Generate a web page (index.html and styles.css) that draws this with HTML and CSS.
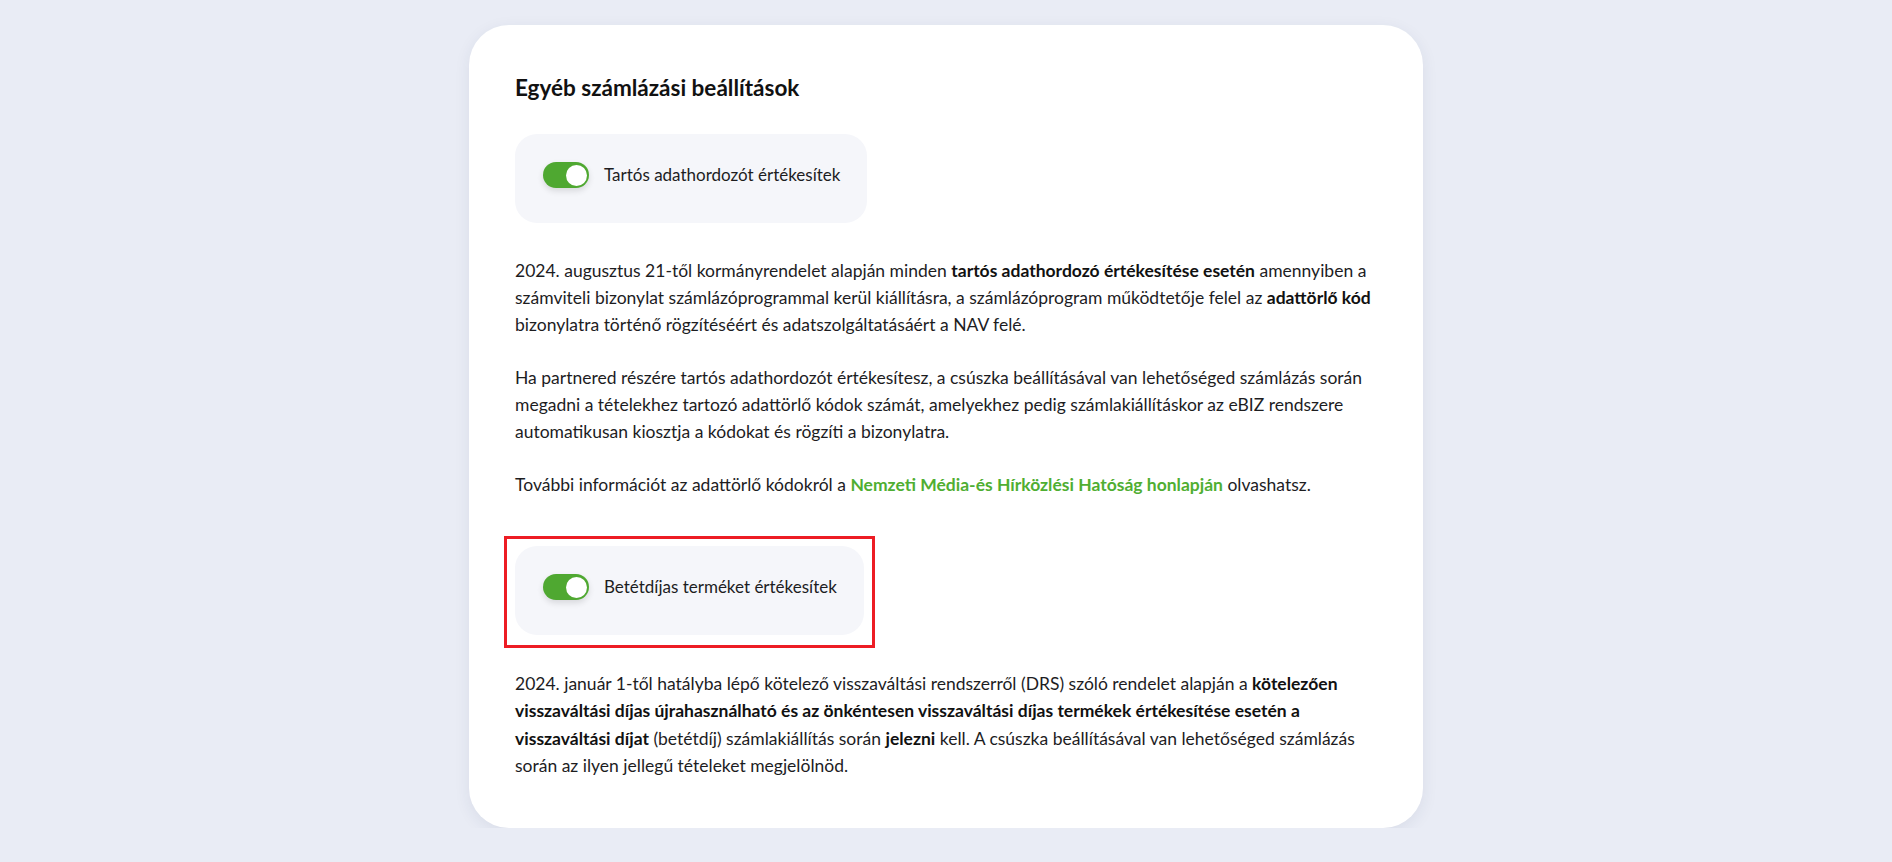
FILE: index.html
```html
<!DOCTYPE html>
<html lang="hu">
<head>
<meta charset="utf-8">
<title>Egyéb számlázási beállítások</title>
<link rel="stylesheet" href="styles.css">
</head>
<body>
<main class="card">
  <h2 class="title">Egyéb számlázási beállítások</h2>

  <div class="option option-first">
    <span class="switch"><span class="knob"></span></span>
    <span class="option-label">Tartós adathordozót értékesítek</span>
  </div>

  <p class="text first-text">2024. augusztus 21-től kormányrendelet alapján minden <b>tartós adathordozó értékesítése esetén</b> amennyiben a<br>számviteli bizonylat számlázóprogrammal kerül kiállításra, a számlázóprogram működtetője felel az <b>adattörlő kód</b><br>bizonylatra történő rögzítéséért és adatszolgáltatásáért a NAV felé.</p>

  <p class="text">Ha partnered részére tartós adathordozót értékesítesz, a csúszka beállításával van lehetőséged számlázás során<br>megadni a tételekhez tartozó adattörlő kódok számát, amelyekhez pedig számlakiállításkor az eBIZ rendszere<br>automatikusan kiosztja a kódokat és rögzíti a bizonylatra.</p>

  <p class="text">További információt az adattörlő kódokról a <a class="link" href="#">Nemzeti Média-és Hírközlési Hatóság honlapján</a> olvashatsz.</p>

  <div class="highlight">
    <div class="option">
      <span class="switch"><span class="knob"></span></span>
      <span class="option-label">Betétdíjas terméket értékesítek</span>
    </div>
  </div>

  <p class="text last-text">2024. január 1-től hatályba lépő kötelező visszaváltási rendszerről (DRS) szóló rendelet alapján a <b>kötelezően</b><br><b>visszaváltási díjas újrahasználható és az önkéntesen visszaváltási díjas termékek értékesítése esetén a</b><br><b>visszaváltási díjat</b> (betétdíj) számlakiállítás során <b>jelezni</b> kell. A csúszka beállításával van lehetőséged számlázás<br>során az ilyen jellegű tételeket megjelölnöd.</p>
</main>
</body>
</html>
```

FILE: styles.css
```css
* { box-sizing: border-box; }

html, body {
  margin: 0;
  padding: 0;
}

body {
  background: #e9ecf5;
  font-family: Lato, "Noto Sans", "Liberation Sans", sans-serif;
  color: #1d1d1f;
}

.card {
  width: 954px;
  margin: 25px auto 0;
  background: #ffffff;
  border-radius: 40px;
  box-shadow: 0 4px 16px rgba(40, 50, 90, 0.08);
  padding: 50px 46px 49px;
}

.title {
  margin: 0 0 33px;
  font-size: 22.5px;
  line-height: 26px;
  font-weight: 700;
  color: #111;
}

.option {
  display: flex;
  width: fit-content;
  align-items: center;
  gap: 15px;
  background: #f5f6fa;
  border-radius: 22px;
  padding: 28px 27px 35px 28px;
}

.switch {
  display: flex;
  align-items: center;
  justify-content: flex-end;
  width: 46px;
  height: 26px;
  border-radius: 13px;
  background: #4fa831;
  padding: 0 2.5px;
  box-shadow: 0 3px 6px rgba(0, 0, 0, 0.12);
  flex: none;
}

.knob {
  width: 21px;
  height: 21px;
  border-radius: 50%;
  background: #fff;
}

.option-label {
  font-size: 17px;
  line-height: 24px;
}

.text {
  margin: 0 0 26.8px;
  font-size: 17.5px;
  line-height: 26.8px;
  white-space: nowrap;
}

.first-text {
  margin-top: 35px;
}

.text b {
  font-weight: 700;
  color: #111;
}

.link {
  color: #4fae32;
  font-weight: 700;
  text-decoration: none;
}

.highlight {
  width: fit-content;
  border: 3px solid #ed1c24;
  padding: 7px 8px 10px 8px;
  margin: 37px 0 22px -11px;
}

.last-text {
  margin-bottom: 0;
  line-height: 27.3px;
}
```
